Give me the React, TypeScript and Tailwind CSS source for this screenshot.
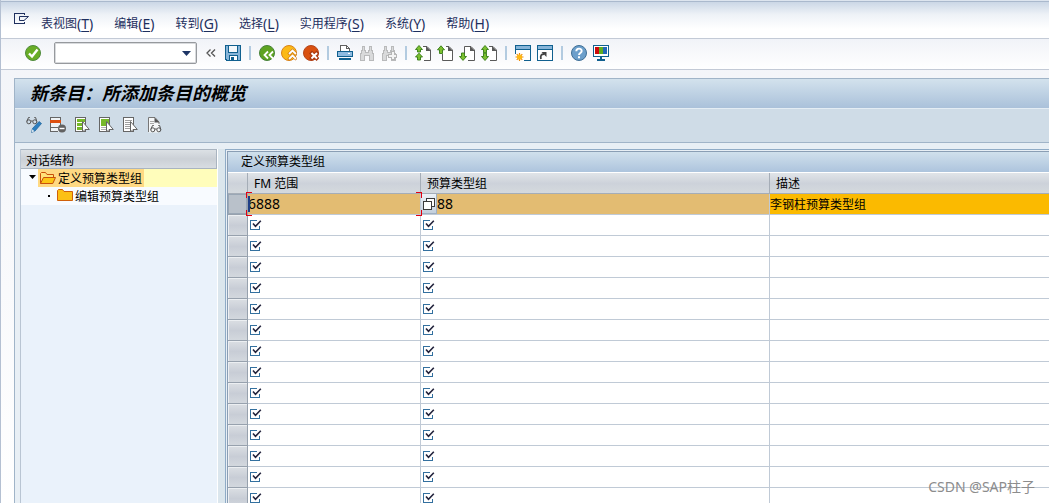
import type { ReactNode } from 'react';

const menus = [
  { label: '表视图', hotkey: 'T' },
  { label: '编辑', hotkey: 'E' },
  { label: '转到', hotkey: 'G' },
  { label: '选择', hotkey: 'L' },
  { label: '实用程序', hotkey: 'S' },
  { label: '系统', hotkey: 'Y' },
  { label: '帮助', hotkey: 'H' },
];

const emptyRows = Array.from({ length: 14 }, (_, i) => i + 2);

function Icon({ children, crisp = true }: { children: ReactNode; crisp?: boolean }) {
  return (
    <svg viewBox="0 0 16 16" className="block size-4" fill="none" shapeRendering={crisp ? 'crispEdges' : 'auto'} aria-hidden="true">
      {children}
    </svg>
  );
}

function ToolButton({ label, children }: { label: string; children: ReactNode }) {
  return (
    <button type="button" aria-label={label} title={label} className="size-4 shrink-0">
      {children}
    </button>
  );
}

function Separator() {
  return (
    <span className="flex w-1.5 shrink-0 justify-center">
      <span className="h-3.5 w-0.5 bg-[#b3cbe0]" />
    </span>
  );
}

function RoundIcon({ fill, stroke, children }: { fill: string; stroke: string; children: ReactNode }) {
  return (
    <Icon crisp={false}>
      <circle cx="8" cy="8" r="7.5" fill={fill} stroke={stroke} />
      {children}
    </Icon>
  );
}

// page outline with a folded corner, arrows show the scroll direction
function PageIcon({ up, down, last }: { up?: boolean; down?: boolean; last?: boolean }) {
  const both = up && down;
  return (
    <Icon crisp={false}>
      <path d="M5.5 1.5H12L15.5 5V15.5H5.5Z" fill="#fff" />
      <path d={both ? 'M8 1.5H12L15.5 5V15.5H9' : up ? 'M9 1.5H12L15.5 5V15.5H5.5V9' : 'M5.5 8V1.5H12L15.5 5V15.5H9'} stroke="#5a5a5a" />
      <path d="M11 1L16 6H11Z" fill="#5a5a5a" />
      {both && !last && (
        <>
          <path d="M4 .5L7.5 4.5H5.5V7H2.5V4.5H.5Z" fill="#7cc02f" stroke="#347a14" strokeWidth=".9" />
          <path d="M4 8.2L7.5 12H5.5V15H2.5V12H.5Z" fill="#7cc02f" stroke="#347a14" strokeWidth=".9" />
        </>
      )}
      {both && last && (
        <>
          <path d="M4 .5L7.5 4.5H5.5V7.8H2.5V4.5H.5Z" fill="#7cc02f" stroke="#347a14" strokeWidth=".9" />
          <path d="M4 15.5L7.5 11.5H5.5V8.2H2.5V11.5H.5Z" fill="#7cc02f" stroke="#347a14" strokeWidth=".9" />
        </>
      )}
      {up && !down && <path d="M4 .8L7.5 4.8H5.5V8.5H2.5V4.8H.5Z" fill="#7cc02f" stroke="#347a14" strokeWidth=".9" />}
      {down && !up && <path d="M4 15.4L7.5 11.5H5.5V8H2.5V11.5H.5Z" fill="#7cc02f" stroke="#347a14" strokeWidth=".9" />}
    </Icon>
  );
}

function Binoculars({ plus }: { plus?: boolean }) {
  return (
    <Icon>
      <path d="M3 1H6V5H7V7H9V5H10V1H13V5H14V8H15V15H10V10H6V15H1V8H2V5H3Z" fill="#d9dadb" />
      <path d="M3.5 1.5H5.5V5.5H6.5V7.5H9.5V5.5H10.5V1.5H12.5V5.5H13.5V8.5H14.5V15.5H10.5V10.5H5.5V15.5H1.5V8.5H2.5V5.5H3.5Z" stroke="#b9babb" />
      {plus && <path d="M10 6.5H13V9H15.5V12H13V14.5H10V12H7.5V9H10Z" fill="#f4f4f4" stroke="#b5b5b5" />}
    </Icon>
  );
}

function SelectIcon({ kind }: { kind: 'all' | 'block' | 'none' }) {
  return (
    <Icon crisp={false}>
      <g shapeRendering="crispEdges">
        <path d="M1.5 .5H11.5V14.5H1.5Z" fill="#fff" stroke="#666" />
        {kind === 'all' && <path d="M3 2H11V5H3ZM3 6H9V9H3ZM3 10H8V13H3Z" fill="#76b82a" />}
        {kind === 'block' && (
          <>
            <path d="M3 2H11V9H3Z" fill="#76b82a" />
            <path d="M3 10.5H8M3 12.5H8" stroke="#b0b0b0" />
          </>
        )}
        {kind === 'none' && <path d="M3 3.5H10M3 5.5H8M3 7.5H8M3 9.5H8M3 11.5H8" stroke="#a0a0a0" />}
      </g>
      <path d="M8.5 4.5V15L11 12.5H15.3Z" fill="#fff" stroke="#666" />
    </Icon>
  );
}

function Glasses({ y = 0, x = 0 }: { y?: number; x?: number }) {
  return (
    <g transform={`translate(${x} ${y})`} stroke="#555">
      <circle cx="2.8" cy="5.8" r="2" />
      <circle cx="8.8" cy="5.8" r="2" />
      <path d="M4.8 5H6.8M.8 5.5L2.5 1.5H3.8M10.8 5.5L9.6 1.5H8.3" />
    </g>
  );
}

function FolderIcon({ open }: { open?: boolean }) {
  return (
    <svg viewBox="0 0 16 14" className="block h-3.5 w-4 shrink-0" fill="none" aria-hidden="true">
      {open ? (
        <>
          <path d="M.5 12.5V2.5L1.5 1.5H5.5L7 3.5H13.5V6" fill="#ffe27a" stroke="#c8500a" />
          <path d="M.5 12.5L3.5 6.5H15.5L12.8 12.5Z" fill="#fcc515" stroke="#c8500a" />
        </>
      ) : (
        <path d="M.5 11.5V1.5L1.5 .5H5.5L7 2.5H15.5V11.5Z" fill="#fcc015" stroke="#d0600a" />
      )}
    </svg>
  );
}

function RequiredBox({ label }: { label: string }) {
  return (
    <label className="ml-0.5 grid size-3">
      <input type="checkbox" defaultChecked aria-label={label} className="peer col-start-1 row-start-1 size-3 appearance-none" />
      <svg viewBox="0 0 12 12" className="pointer-events-none invisible col-start-1 row-start-1 size-3 peer-checked:visible" fill="none" aria-hidden="true">
        <path d="M7 1.5H.5V10.5H9.5V7" stroke="#33709f" shapeRendering="crispEdges" />
        <path d="M3 4.5L5.5 7.3L10.8 1.8" stroke="#22233c" strokeWidth="1.6" />
      </svg>
    </label>
  );
}

function MenuBar() {
  return (
    <nav className="flex h-[37px] items-center border-b border-[#c3cad6] bg-linear-to-b from-[#cbd7e6] via-[#eef2f7] via-35% to-white to-75% pl-[13px] text-[#1e2f5e]">
      <button type="button" aria-label="系统菜单" className="w-4">
        <Icon crisp={false}>
          <path d="M10.5 3V1.5H.5V11.5H10.5V9.5" stroke="currentColor" shapeRendering="crispEdges" />
          <path d="M14.5 4.5H5.5V8.5H10L14.5 4.5" stroke="currentColor" />
        </Icon>
      </button>
      <div className="flex gap-[21px] pt-2 pl-[11px]">
        {menus.map((m) => (
          <button key={m.hotkey} type="button" className="flex items-center text-[12px] leading-5 whitespace-nowrap">
            {m.label}
            <span className="text-[14px]">
              (<u className="underline-offset-2">{m.hotkey}</u>)
            </span>
          </button>
        ))}
      </div>
    </nav>
  );
}

function StandardToolbar() {
  return (
    <div className="flex h-[31px] items-center gap-1.5 border-b border-[#c3cad6] bg-linear-to-b from-[#f1f3f8] to-white pb-0.5 pl-6" role="toolbar">
      <ToolButton label="回车">
        <RoundIcon fill="#69ad26" stroke="#4f8a3c">
          <path d="M4 8.5L7 11.5L12.5 4.5" stroke="#fff" strokeWidth="2.4" />
        </RoundIcon>
      </ToolButton>
      <div className="ml-[7px] grid w-[143px] shrink-0 items-center">
        <input aria-label="命令" className="col-start-1 row-start-1 h-[22px] w-full rounded-xs border border-[#96999d] bg-white pr-5 pl-1 text-[13px] shadow-[inset_0_0_0_1px_#d8dadd]" />
        <svg viewBox="0 0 9 5" className="pointer-events-none col-start-1 row-start-1 mr-1.5 h-[5px] w-[9px] justify-self-end" aria-hidden="true">
          <path d="M0 0H9L4.5 5Z" fill="#1e3566" />
        </svg>
      </div>
      <ToolButton label="折叠">
        <Icon crisp={false}>
          <path d="M7.5 4.5L4 8L7.5 11.5M12 4.5L8.5 8L12 11.5" stroke="#555" strokeWidth="1.3" />
        </Icon>
      </ToolButton>
      <ToolButton label="保存">
        <Icon>
          <path d="M.5 .5H15.5V15.5H2L.5 14Z" fill="#86b4d8" stroke="#10608f" />
          <path d="M3.5 .5H12.5V7.5H3.5Z" fill="#f4f8fb" stroke="#10608f" />
          <path d="M4.5 10.5H12.5V15.5H4.5Z" fill="#fff" stroke="#10608f" />
          <path d="M6 12H9V15H6Z" fill="#10608f" />
        </Icon>
      </ToolButton>
      <Separator />
      <ToolButton label="返回">
        <RoundIcon fill="#5ea321" stroke="#47823a">
          <path d="M9 6.5L5.5 10L9 13.5M14 6.5L10.5 10L14 13.5" stroke="#fff" strokeWidth="1.8" />
        </RoundIcon>
      </ToolButton>
      <ToolButton label="退出">
        <RoundIcon fill="#fbb917" stroke="#d98218">
          <path d="M7.5 9.5L11.5 5.5L15.5 9.5M7.5 14.5L11.5 10.5L15.5 14.5" stroke="#c96f10" strokeWidth="3" />
          <path d="M8 9L11.5 5.5L15 9M8 14L11.5 10.5L15 14" stroke="#fff" strokeWidth="1.8" />
        </RoundIcon>
      </ToolButton>
      <ToolButton label="取消">
        <RoundIcon fill="#d9500f" stroke="#b4461c">
          <path d="M7.5 7L15 14.5M15 7L7.5 14.5" stroke="#a93810" strokeWidth="4" />
          <path d="M8.5 8L14 13.5M14 8L8.5 13.5" stroke="#fff" strokeWidth="2" />
        </RoundIcon>
      </ToolButton>
      <Separator />
      <ToolButton label="打印">
        <Icon>
          <path d="M3.5 7V.5H9.5L12.5 3.5V7" fill="#fff" stroke="#606060" />
          <path d="M9 1H10V3H12V4H9Z" fill="#606060" />
          <path d="M.5 6.5H15.5V11.5H.5Z" fill="#8fbbe0" stroke="#10608f" />
          <path d="M11 8H13V9H11Z" fill="#fff" />
          <path d="M2 13H14V15H2Z" fill="#10608f" />
        </Icon>
      </ToolButton>
      <ToolButton label="查找">
        <Binoculars />
      </ToolButton>
      <ToolButton label="查找下一个">
        <Binoculars plus />
      </ToolButton>
      <Separator />
      <ToolButton label="首页">
        <PageIcon up down />
      </ToolButton>
      <ToolButton label="上一页">
        <PageIcon up />
      </ToolButton>
      <ToolButton label="下一页">
        <PageIcon down />
      </ToolButton>
      <ToolButton label="末页">
        <PageIcon up down last />
      </ToolButton>
      <Separator />
      <ToolButton label="创建新会话">
        <Icon crisp={false}>
          <g shapeRendering="crispEdges">
            <path d="M.5 .5H15.5V15.5H.5Z" fill="#fff" />
            <path d="M.5 9V.5H15.5V15.5H9" stroke="#10608f" />
            <path d="M1 1H15V4H1Z" fill="#86b4d8" />
            <path d="M1 4.5H15" stroke="#10608f" />
          </g>
          <path d="M4.5 8V16M.5 12H8.5M1.7 9.2L7.3 14.8M7.3 9.2L1.7 14.8" stroke="#ee8a0a" strokeWidth="1.2" />
          <circle cx="4.5" cy="12" r="2.6" fill="#fdb813" />
        </Icon>
      </ToolButton>
      <ToolButton label="生成快捷方式">
        <Icon crisp={false}>
          <g shapeRendering="crispEdges">
            <path d="M.5 .5H15.5V15.5H.5Z" fill="#fff" stroke="#10608f" />
            <path d="M1 1H15V4H1Z" fill="#86b4d8" />
            <path d="M1 4.5H15" stroke="#10608f" />
          </g>
          <path d="M4 14C3 10.5 4.5 9.2 7 9" stroke="#444" strokeWidth="1.8" />
          <path d="M4.5 7H9.5V12Z" fill="#444" />
        </Icon>
      </ToolButton>
      <Separator />
      <ToolButton label="帮助">
        <RoundIcon fill="#6c9fcb" stroke="#3f6f96">
          <path d="M5.3 6.2C5.3 2.8 10.7 2.8 10.7 6C10.7 8 8 8 8 10" stroke="#fff" strokeWidth="1.9" />
          <path d="M7 11.2H9V13.2H7Z" fill="#fff" />
        </RoundIcon>
      </ToolButton>
      <ToolButton label="定制本地布局">
        <Icon>
          <path d="M.5 .5H15.5V11.5H.5Z" fill="#fff" stroke="#10608f" />
          <path d="M2 2H6V9H2Z" fill="#cc0a0a" />
          <path d="M6 2H10V9H6Z" fill="#5fae22" />
          <path d="M10 2H14V9H10Z" fill="#2468b8" />
          <path d="M7 12H9V14H12V16H4V14H7Z" fill="#10608f" />
        </Icon>
      </ToolButton>
    </div>
  );
}

function AppToolbar() {
  return (
    <div className="flex h-[34px] items-center gap-2 border-b border-[#a0b4c8] bg-[#cfdce7] pb-0.5 pl-[11px]" role="toolbar">
      <ToolButton label="显示/更改">
        <Icon crisp={false}>
          <Glasses y={-1} />
          <path d="M5.5 15.5L6.5 11.5L13 4.5L15.5 6.5L9 14Z" fill="#2d7fc0" stroke="#1d5f94" strokeWidth=".7" />
          <path d="M5.5 15.5L6.3 12.3L8.5 14.3Z" fill="#d8e4ee" />
        </Icon>
      </ToolButton>
      <ToolButton label="删除">
        <Icon crisp={false}>
          <g shapeRendering="crispEdges">
            <path d="M.5 .5H10.5V14.5H.5Z" fill="#eef2f5" />
            <path d="M10.5 8V.5H.5V14.5H8M1 10.5H8" stroke="#666" />
            <path d="M0 3H11V6H0Z" fill="#dc4f0f" />
          </g>
          <circle cx="12" cy="11.5" r="4" fill="#626262" />
          <path d="M9.5 11.5H14.5" stroke="#fff" strokeWidth="1.4" />
        </Icon>
      </ToolButton>
      <ToolButton label="全选">
        <SelectIcon kind="all" />
      </ToolButton>
      <ToolButton label="选择块">
        <SelectIcon kind="block" />
      </ToolButton>
      <ToolButton label="取消全选">
        <SelectIcon kind="none" />
      </ToolButton>
      <ToolButton label="打印格式">
        <Icon crisp={false}>
          <path d="M2.5 .5H9L13.5 5V15.5H2.5Z" fill="#f5f7f8" />
          <path d="M2.5 15V.5H9L13 5V7" stroke="#777" />
          <path d="M8.5 .5L13.5 5.5H8.5Z" fill="#555" />
          <path d="M4 4.5H8M4 6.5H8" stroke="#aaa" />
          <Glasses x={4} y={7} />
        </Icon>
      </ToolButton>
    </div>
  );
}

function DialogTree() {
  return (
    <aside className="flex w-[198px] shrink-0 flex-col border-r border-l border-r-white border-l-[#b9c5d3] bg-[#eaf2fb] text-[12px] text-black">
      <h2 className="h-5 border border-l-0 border-[#a9b4c0] bg-linear-to-b from-[#dce1e5] via-[#cbd0d6] to-[#d8dde2] pt-px pl-[5px] leading-5">对话结构</h2>
      <ul>
        <li className="flex h-[18px] bg-[#fffdbb]">
          <button type="button" aria-label="折叠" className="flex w-[17px] shrink-0 justify-center bg-[#f8fbff] pt-1.5 pl-1.5">
            <svg viewBox="0 0 7 4" className="h-1 w-[7px]" aria-hidden="true">
              <path d="M0 0H7L3.5 4Z" fill="#000" />
            </svg>
          </button>
          <a href="#types" className="flex items-center gap-0.5 bg-[#ffd983] px-0.5">
            <FolderIcon open />
            <span className="pt-0.5 leading-4">定义预算类型组</span>
          </a>
        </li>
        <li className="flex h-[18px] items-center bg-[#f8fbff] pl-[27px]">
          <span className="size-0.5 bg-black" />
          <a href="#edit" className="flex items-center gap-0.5 pl-[7px]">
            <FolderIcon />
            <span className="pt-0.5 leading-4">编辑预算类型组</span>
          </a>
        </li>
      </ul>
    </aside>
  );
}

function RowSelector({ row, selected }: { row: number; selected?: boolean }) {
  return (
    <th scope="row" className="h-[21px] border-r border-b border-[#97a1ad] p-0">
      <button
        type="button"
        aria-label={`选择行 ${row}`}
        className={
          selected
            ? 'block h-5 w-full border border-[#9aa7b5] bg-[#b9c1ca]'
            : 'block h-5 w-full border-t border-l border-[#eceff2] bg-linear-to-b from-[#d9dde2] via-[#c8cdd6] to-[#d3d8de]'
        }
      />
    </th>
  );
}

// red marks around the focused cell
function FocusCorners() {
  return (
    <>
      <span className="pointer-events-none absolute -top-0.5 -left-0.5 size-1.5 border-t border-l border-[#e3000f]" />
      <span className="pointer-events-none absolute -top-0.5 -right-0.5 size-1.5 border-t border-r border-[#e3000f]" />
      <span className="pointer-events-none absolute -bottom-0.5 -left-0.5 size-1.5 border-b border-l border-[#e3000f]" />
      <span className="pointer-events-none absolute -right-0.5 -bottom-0.5 size-1.5 border-r border-b border-[#e3000f]" />
    </>
  );
}

function BudgetTable() {
  const head = 'h-[21px] border-r border-b border-[#a5adb7] p-0 pt-0.5 pl-1.5 text-left leading-[18px] font-normal last:border-r-0';
  const cell = 'h-[21px] border-r border-b border-[#c0cad6] p-0 last:border-r-0';
  return (
    <section className="min-w-0 flex-1 overflow-hidden border-t border-l border-[#8fabc6] pt-px pl-px">
      <div className="h-full border-t border-l border-[#8a9eb4] bg-white">
        <h2 className="h-5 bg-linear-to-b from-[#d0e0ec] to-[#adc4dd] pl-[13px] text-[12px] leading-5 text-black">定义预算类型组</h2>
        <table className="mt-px w-full table-fixed border-separate border-spacing-0 text-[12px] leading-5 text-black">
          <colgroup>
            <col className="w-5" />
            <col className="w-[173px]" />
            <col className="w-[349px]" />
            <col />
          </colgroup>
          <thead>
            <tr className="bg-linear-to-b from-[#e0e4e8] via-[#cdd2da] to-[#d5dade]">
              <th className={head} aria-label="行" />
              <th className={head} scope="col">FM 范围</th>
              <th className={head} scope="col">预算类型组</th>
              <th className={head} scope="col">描述</th>
            </tr>
          </thead>
          <tbody>
            <tr>
              <RowSelector row={1} selected />
              <td className={`${cell} relative bg-[#e3bc72]`}>
                <input aria-label="FM 范围" defaultValue="6888" className="block h-5 w-full bg-transparent text-[14px]" />
                <span className="pointer-events-none absolute top-0.5 left-0 h-4 w-0.5 bg-[#1f3f86]" />
                <FocusCorners />
              </td>
              <td className={`${cell} bg-[#e3bc72]`}>
                <div className="flex h-5">
                  <button type="button" aria-label="搜索帮助" className="flex h-5 w-4 shrink-0 items-center justify-center border-r border-b border-[#9fb0c2] bg-linear-to-b from-[#edf2f7] to-[#c3cfdd]">
                    <svg viewBox="0 0 12 12" className="size-3" fill="#fff" stroke="#3a3a3a" shapeRendering="crispEdges" aria-hidden="true">
                      <path d="M3.5 .5H11.5V8.5H3.5Z" />
                      <path d="M.5 3.5H8.5V11.5H.5Z" />
                    </svg>
                  </button>
                  <input aria-label="预算类型组" defaultValue="88" className="h-5 w-full min-w-0 bg-transparent text-[14px]" />
                </div>
              </td>
              <td className={`${cell} bg-[#fbba00]`}>
                <input aria-label="描述" defaultValue="李钢柱预算类型组" className="block h-5 w-full bg-transparent pt-0.5 text-[12px]" />
              </td>
            </tr>
            {emptyRows.map((row) => (
              <tr key={row}>
                <RowSelector row={row} />
                <td className={cell}>
                  <RequiredBox label={`FM 范围 ${row}`} />
                </td>
                <td className={cell}>
                  <RequiredBox label={`预算类型组 ${row}`} />
                </td>
                <td className={cell} />
              </tr>
            ))}
          </tbody>
        </table>
      </div>
    </section>
  );
}

export default function App() {
  return (
    <div className="relative flex h-screen flex-col overflow-hidden border-l border-[#b4c0d2] bg-linear-to-b from-[#f1f3f8] to-white [font-family:'Noto_Sans','Noto_Sans_CJK_SC',sans-serif]">
      <div className="h-0.5 shrink-0 border-b border-[#aab9cd] bg-[#dde5ef]" />
      <MenuBar />
      <StandardToolbar />
      <main className="mt-2 ml-[13px] flex min-h-0 flex-1 flex-col border-t border-l border-[#a0b4c8] bg-[#e8eff5]">
        <h1 className="h-[30px] shrink-0 border-b border-[#e4edf4] bg-linear-to-b from-[#d3e2ed] to-[#aac1da] pl-[15px] text-[18px] leading-7 font-bold text-black italic">
          新条目：所添加条目的概览
        </h1>
        <AppToolbar />
        <div className="flex min-h-0 flex-1 pt-1.5 pl-[5px]">
          <DialogTree />
          <div className="w-[7px] shrink-0 bg-[#dbe6ed]" />
          <BudgetTable />
        </div>
      </main>
      <p className="pointer-events-none absolute right-3.5 bottom-1.5 text-[14px] leading-5 text-[#8c8c8c]">CSDN @SAP柱子</p>
    </div>
  );
}
